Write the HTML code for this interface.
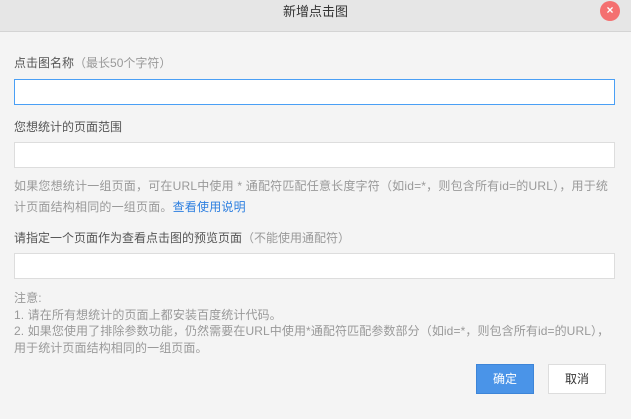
<!DOCTYPE html><html><head><meta charset="utf-8"><style>
body{margin:0;width:631px;height:419px;background:#f4f4f4;font-family:"Liberation Sans","Noto Sans CJK SC",sans-serif;font-size:12px;color:#555;position:relative;overflow:hidden}
.hd{position:absolute;left:0;top:0;width:631px;height:31px;background:#e6e6e6;border-bottom:1px solid #d4d4d4;text-align:center;line-height:23px;font-size:13px;color:#333}
.x{position:absolute;left:600px;top:1px;width:20px;height:20px;border-radius:50%;background:#f47070;color:#fff;font-size:12px;line-height:19px;text-align:center;font-weight:bold}
.a{position:absolute;left:14px;white-space:nowrap}
.in{position:absolute;left:14px;width:599px;height:24px;background:#fff;border:1px solid #ddd}
.g{color:#999}
.btn{position:absolute;top:364px;height:28px;line-height:28px;text-align:center;font-size:12px}
</style></head><body>
<div class="hd">新增点击图</div><div class="x">×</div>
<div class="a" style="top:54px">点击图名称<span class="g">（最长50个字符）</span></div>
<div class="in" style="top:79px;border-color:#4a9ff5"></div>
<div class="a" style="top:118px">您想统计的页面范围</div>
<div class="in" style="top:142px"></div>
<div class="a g" style="top:176px;line-height:21px;letter-spacing:0.2px">如果您想统计一组页面，可在URL中使用 * 通配符匹配任意长度字符（如id=*，则包含所有id=的URL），用于统<br>计页面结构相同的一组页面。<span style="color:#2d7fe0">查看使用说明</span></div>
<div class="a" style="top:229px">请指定一个页面作为查看点击图的预览页面<span class="g">（不能使用通配符）</span></div>
<div class="in" style="top:253px"></div>
<div class="a g" style="top:290px;line-height:16.5px;letter-spacing:0.1px">注意:<br>1. 请在所有想统计的页面上都安装百度统计代码。<br>2. 如果您使用了排除参数功能，仍然需要在URL中使用*通配符匹配参数部分（如id=*，则包含所有id=的URL），<br>用于统计页面结构相同的一组页面。</div>
<div class="btn" style="left:476px;width:56px;background:#4a94e8;border:1px solid #3d85d8;color:#fff">确定</div>
<div class="btn" style="left:548px;width:56px;background:#fff;border:1px solid #ddd;color:#333">取消</div>
</body></html>
